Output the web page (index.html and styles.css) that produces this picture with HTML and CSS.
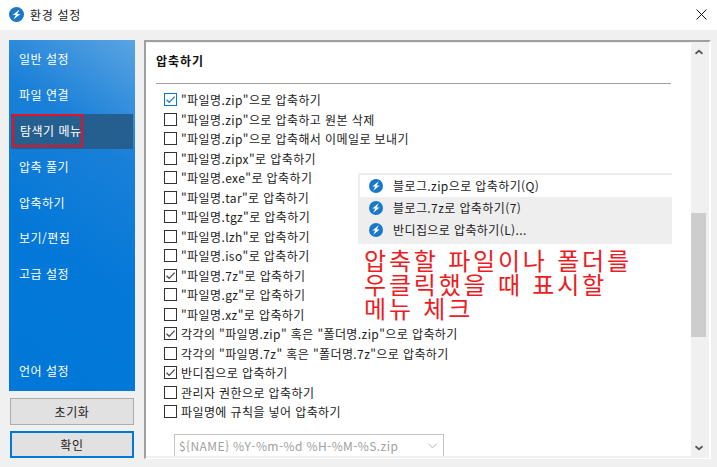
FILE: index.html
```html
<!DOCTYPE html>
<html lang="ko">
<head>
<meta charset="utf-8">
<title>환경 설정</title>
<link rel="stylesheet" href="styles.css">
</head>
<body>
<div class="window">
  <header class="titlebar">
    <svg class="app-icon" viewBox="0 0 16 16"><circle cx="8" cy="8" r="8" fill="#1a78c8"/><path d="M11.200 2.600 3.800 8.600h3.400L4.800 13.400 12.200 7.400H8.800z" fill="#fff"/></svg>
    <span class="title">환경 설정</span>
    <svg class="close" viewBox="0 0 11 11"><path d="M.5.5l10 10M10.500.5l-10 10" stroke="#111" stroke-width="1" fill="none"/></svg>
  </header>
  <main class="body">
    <div class="left">
      <nav class="sidebar">
        <a class="nav">일반 설정</a>
        <a class="nav">파일 연결</a>
        <a class="nav active"><span class="mark">탐색기 메뉴</span></a>
        <a class="nav">압축 풀기</a>
        <a class="nav">압축하기</a>
        <a class="nav">보기/편집</a>
        <a class="nav">고급 설정</a>
        <a class="nav lang">언어 설정</a>
      </nav>
      <button class="btn">초기화</button>
      <button class="btn primary">확인</button>
    </div>
    <section class="panel">
      <div class="content">
        <h2 class="heading">압축하기</h2>
        <ul class="list">
          <li class="row"><span class="box focus"><svg viewBox="0 0 13 13"><path d="M2.500 6.800 5.200 9.300 10.600 3.600" stroke="#1a78d0" stroke-width="1.200" fill="none"/></svg></span>"파일명.zip"으로 압축하기</li>
          <li class="row"><span class="box"></span>"파일명.zip"으로 압축하고 원본 삭제</li>
          <li class="row"><span class="box"></span>"파일명.zip"으로 압축해서 이메일로 보내기</li>
          <li class="row"><span class="box"></span>"파일명.zipx"로 압축하기</li>
          <li class="row"><span class="box"></span>"파일명.exe"로 압축하기</li>
          <li class="row"><span class="box"></span>"파일명.tar"로 압축하기</li>
          <li class="row"><span class="box"></span>"파일명.tgz"로 압축하기</li>
          <li class="row"><span class="box"></span>"파일명.lzh"로 압축하기</li>
          <li class="row"><span class="box"></span>"파일명.iso"로 압축하기</li>
          <li class="row"><span class="box"><svg viewBox="0 0 13 13"><path d="M2.500 6.800 5.200 9.300 10.600 3.600" stroke="#444" stroke-width="1.200" fill="none"/></svg></span>"파일명.7z"로 압축하기</li>
          <li class="row"><span class="box"></span>"파일명.gz"로 압축하기</li>
          <li class="row"><span class="box"></span>"파일명.xz"로 압축하기</li>
          <li class="row"><span class="box"><svg viewBox="0 0 13 13"><path d="M2.500 6.800 5.200 9.300 10.600 3.600" stroke="#444" stroke-width="1.200" fill="none"/></svg></span>각각의 "파일명.zip" 혹은 "폴더명.zip"으로 압축하기</li>
          <li class="row"><span class="box"></span>각각의 "파일명.7z" 혹은 "폴더명.7z"으로 압축하기</li>
          <li class="row"><span class="box"><svg viewBox="0 0 13 13"><path d="M2.500 6.800 5.200 9.300 10.600 3.600" stroke="#444" stroke-width="1.200" fill="none"/></svg></span>반디집으로 압축하기</li>
          <li class="row"><span class="box"></span>관리자 권한으로 압축하기</li>
          <li class="row"><span class="box"></span>파일명에 규칙을 넣어 압축하기</li>
        </ul>
        <div class="select"><span>${NAME} %Y-%m-%d %H-%M-%S.zip</span><svg class="chev" viewBox="0 0 10 6"><path d="M.5.5 5 5 9.500.5" stroke="#aaa" fill="none"/></svg></div>
      </div>
      <div class="scrollbar">
        <svg class="arrow" viewBox="0 0 8 6"><path d="M4 .5 8 4 7 5.500 4 3 1 5.500 0 4z" fill="#555"/></svg>
        <div class="track"><div class="thumb"></div></div>
        <svg class="arrow" viewBox="0 0 8 6"><path d="M4 5.500 8 2 7 .5 4 3 1 .5 0 2z" fill="#555"/></svg>
      </div>
    </section>
  </main>
  <div class="menu">
    <div class="mi hot"><svg class="mi-icon" viewBox="0 0 16 16"><circle cx="8" cy="8" r="8" fill="#1a78c8"/><path d="M11.200 2.600 3.800 8.600h3.400L4.800 13.400 12.200 7.400H8.800z" fill="#fff"/></svg>블로그.zip으로 압축하기(Q)</div>
    <div class="mi"><svg class="mi-icon" viewBox="0 0 16 16"><circle cx="8" cy="8" r="8" fill="#1a78c8"/><path d="M11.200 2.600 3.800 8.600h3.400L4.800 13.400 12.200 7.400H8.800z" fill="#fff"/></svg>블로그.7z로 압축하기(7)</div>
    <div class="mi"><svg class="mi-icon" viewBox="0 0 16 16"><circle cx="8" cy="8" r="8" fill="#1a78c8"/><path d="M11.200 2.600 3.800 8.600h3.400L4.800 13.400 12.200 7.400H8.800z" fill="#fff"/></svg>반디집으로 압축하기(L)...</div>
  </div>
  <p class="note">압축할 파일이나 폴더를<br>우클릭했을 때 표시할<br>메뉴 체크</p>
</div>
</body>
</html>
```
FILE: styles.css
```css
* { box-sizing: border-box; }
html, body { margin: 0; padding: 0; }
body { width: 717px; height: 467px; overflow: hidden; background: #f0f0f0; font-family: "Noto Sans CJK KR", "Open Sans", sans-serif; font-size: 12px; letter-spacing: .4px; color: #1a1a1a; }
.window { position: relative; width: 717px; height: 467px; display: flex; flex-direction: column; }
.titlebar { height: 30px; flex: none; background: #fff; display: flex; align-items: center; padding: 0 10px 2px 9px; }
.app-icon { width: 15px; height: 15px; flex: none; }
.title { margin-left: 6px; font-size: 12px; letter-spacing: .7px; flex: 1; }
.close { width: 11px; height: 11px; }
.body { flex: 1; display: flex; padding: 10px 6px 8px 9px; gap: 9px; min-height: 0; }
.left { width: 126px; flex: none; display: flex; flex-direction: column; }
.sidebar { height: 351px; flex: none; background: linear-gradient(215deg, #5aa4e2 0%, #1a80d8 28%, #0478d8 60%, #0078d7 100%); display: flex; flex-direction: column; padding: 1px 2px; }
.nav { height: 35.6px; flex: none; display: flex; align-items: center; padding-left: 8px; color: #fff; font-size: 12px; letter-spacing: .5px; }
.nav.active { background: #255f90; margin-top: 1.8px; height: 35px; padding-left: 1px; align-items: flex-start; }
.mark { display: flex; align-items: center; padding: 0 0 0 6px; width: 71px; height: 33px; border: 2px solid #e81123; white-space: nowrap; }
.lang { margin-top: auto; margin-bottom: 2px; }
.btn { height: 27px; margin: 7px 0 0 1px; width: 124px; flex: none; background: #e1e1e1; border: 1px solid #adadad; font: inherit; letter-spacing: .6px; color: #1a1a1a; padding: 0 0 1px; }
.btn.primary { border: 2px solid #0078d7; margin-top: 6px; }
.panel { flex: 1; display: flex; min-width: 0; border-top: 2px solid #a0a0a0; border-left: 2px solid #a0a0a0; border-right: 2px solid #fff; border-bottom: 1px solid #fff; padding: 1px 0 2px; height: 419px; }
.content { flex: 1; background: #fff; padding: 0 20px 0 10px; overflow: hidden; min-width: 0; }
.heading { margin: 0; height: 41px; padding-top: 9px; line-height: 18px; font-size: 12px; font-weight: 700; letter-spacing: 1px; color: #111; border-bottom: 1px solid #a0a0a0; }
.list { list-style: none; margin: 6px 0 0; padding: 0 0 0 8px; }
.row { height: 19.5px; display: flex; align-items: center; white-space: nowrap; }
.box { width: 13px; height: 13px; flex: none; border: 1px solid #333; background: #fff; margin-right: 4px; position: relative; }
.box svg { position: absolute; left: -1px; top: -1px; width: 13px; height: 13px; }
.box.focus { border-color: #0078d7; }
.select { margin: 12px 0 0 18px; width: 270px; height: 24px; border: 1px solid #c4c4c4; color: #a0a0a0; padding: 0 6px 0 4px; display: flex; align-items: center; justify-content: space-between; }
.chev { width: 9px; height: 6px; }
.scrollbar { width: 15px; flex: none; display: flex; flex-direction: column; align-items: center; background: #f0f0f0; margin-right: 3px; }
.arrow { width: 8px; height: 6px; margin: 6px 0 5px; flex: none; }
.track { flex: 1; width: 15px; position: relative; }
.thumb { position: absolute; left: 0; top: 153px; width: 15px; height: 124px; background: #cdcdcd; }
.menu { position: absolute; left: 358px; top: 173px; width: 314px; height: 71px; background: #eeeeee; padding-top: 2px; }
.mi { height: 22px; display: flex; align-items: center; padding: 0 0 2px 11px; }
.mi.hot { background: #fff; margin-left: 2px; padding-left: 9px; }
.mi-icon { width: 14px; height: 14px; margin: 2px 10px 0 0; flex: none; }
.note { position: absolute; left: 364px; top: 248px; margin: 0; color: #ed1c24; font-size: 24px; line-height: 24px; letter-spacing: 2.8px; font-weight: 400; white-space: nowrap; }
```
